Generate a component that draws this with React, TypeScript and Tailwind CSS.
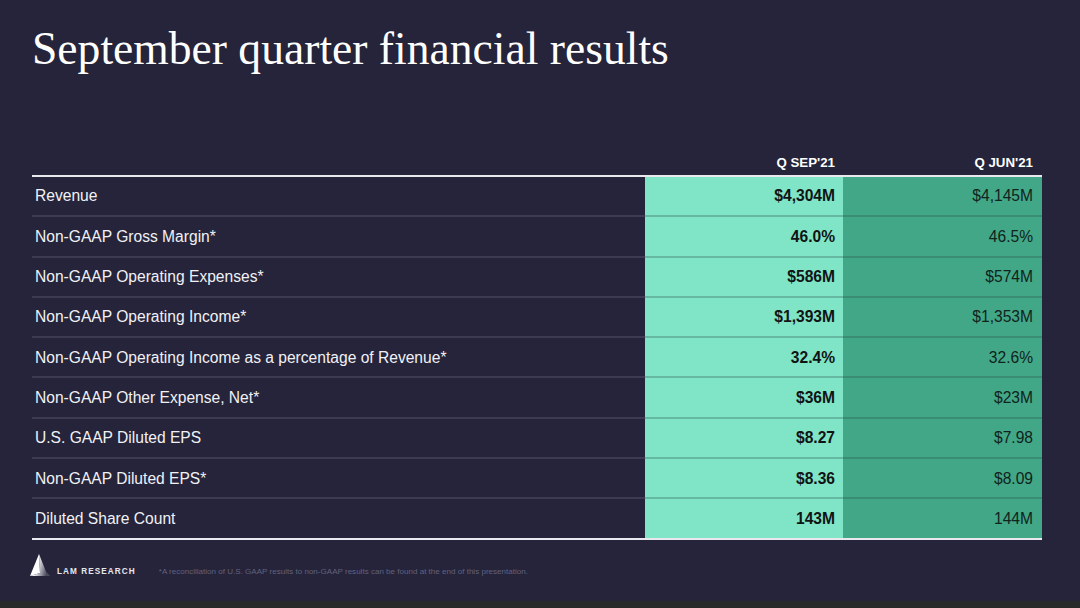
import React from "react";

// --- data ---

const rows = [
  { label: "Revenue", sep: "$4,304M", jun: "$4,145M" },
  { label: "Non-GAAP Gross Margin*", sep: "46.0%", jun: "46.5%" },
  { label: "Non-GAAP Operating Expenses*", sep: "$586M", jun: "$574M" },
  { label: "Non-GAAP Operating Income*", sep: "$1,393M", jun: "$1,353M" },
  {
    label: "Non-GAAP Operating Income as a percentage of Revenue*",
    sep: "32.4%",
    jun: "32.6%",
  },
  { label: "Non-GAAP Other Expense, Net*", sep: "$36M", jun: "$23M" },
  { label: "U.S. GAAP Diluted EPS", sep: "$8.27", jun: "$7.98" },
  { label: "Non-GAAP Diluted EPS*", sep: "$8.36", jun: "$8.09" },
  { label: "Diluted Share Count", sep: "143M", jun: "144M" },
];

const sans = { fontFamily: '"Liberation Sans", Arial, sans-serif' };

function LamLogo() {
  return (
    <svg width="22" height="26" viewBox="0 0 22 26">
      <defs>
        <linearGradient id="lamShade" x1="0" y1="0" x2="1" y2="0.3">
          <stop offset="0" stopColor="#ffffff" />
          <stop offset="0.45" stopColor="#f2f2f5" />
          <stop offset="0.75" stopColor="#9a9aa8" />
          <stop offset="1" stopColor="#4a4a5c" />
        </linearGradient>
      </defs>
      <path d="M10 1 L1 23 L11 20 Z" fill="#ffffff" />
      <path d="M10 1 L11 20 L1 23 L21 23 L17 18.5 Z" fill="url(#lamShade)" />
    </svg>
  );
}

export default function App() {
  return (
    <div className="w-[1080px] h-[608px] bg-[#2a2a2a] flex flex-col overflow-hidden">
      <div className="h-[601px] bg-[#25243a] flex flex-col px-8">
        {/* Title */}
        <h1
          className="mt-[26px] text-[45.6px] leading-[45px] text-white"
          style={{ fontFamily: '"Liberation Serif", "Times New Roman", serif' }}
        >
          September quarter financial results
        </h1>

        {/* Table */}
        <div className="mt-[80px] w-[1010px]" style={sans}>
          <div className="grid grid-cols-[613px_198px_199px] h-[24px] items-center text-[13.3px] font-bold text-white">
            <div />
            <div className="text-right pr-2">Q SEP'21</div>
            <div className="text-right pr-[9px]">Q JUN'21</div>
          </div>
          <div className="h-[2px] bg-[#e8e8ee]" />
          {rows.map((r, i) => {
            const last = i === rows.length - 1;
            return (
              <div
                key={r.label}
                className="grid grid-cols-[613px_198px_199px] text-[15.6px]"
              >
                <div
                  className={
                    last
                      ? "h-[38.6px] flex items-center pl-[3px] text-[#f1f1f5]"
                      : "h-[40.3px] flex items-center pl-[3px] text-[#f1f1f5] border-b-2 border-[#3c3b52]"
                  }
                >
                  {r.label}
                </div>
                <div
                  className={
                    last
                      ? "h-[38.6px] flex items-center justify-end pr-2 bg-[#80e4c6] font-bold text-[#111414]"
                      : "h-[40.3px] flex items-center justify-end pr-2 bg-[#80e4c6] font-bold text-[#111414] border-b-2 border-[#66b9a0]"
                  }
                >
                  {r.sep}
                </div>
                <div
                  className={
                    last
                      ? "h-[38.6px] flex items-center justify-end pr-[9px] bg-[#42a786] text-[#10231c]"
                      : "h-[40.3px] flex items-center justify-end pr-[9px] bg-[#42a786] text-[#10231c] border-b-2 border-[#3a8d72]"
                  }
                >
                  {r.jun}
                </div>
              </div>
            );
          })}
          <div className="h-[2px] bg-[#e8e8ee]" />
        </div>

        {/* Footer */}
        <div className="mt-[13px] flex items-end" style={sans}>
          <div className="ml-[-3px] w-[22px] h-[26px]">
            <LamLogo />
          </div>
          <div className="ml-[6px] mb-[3px] text-[8.2px] font-bold tracking-[0.13em] text-[#e6e6ee] leading-none">
            LAM RESEARCH
          </div>
          <div className="ml-[23px] mb-[3px] text-[8.05px] text-[#62627e] leading-none">
            *A reconciliation of U.S. GAAP results to non-GAAP results can be found at the end of this presentation.
          </div>
        </div>
      </div>
    </div>
  );
}
